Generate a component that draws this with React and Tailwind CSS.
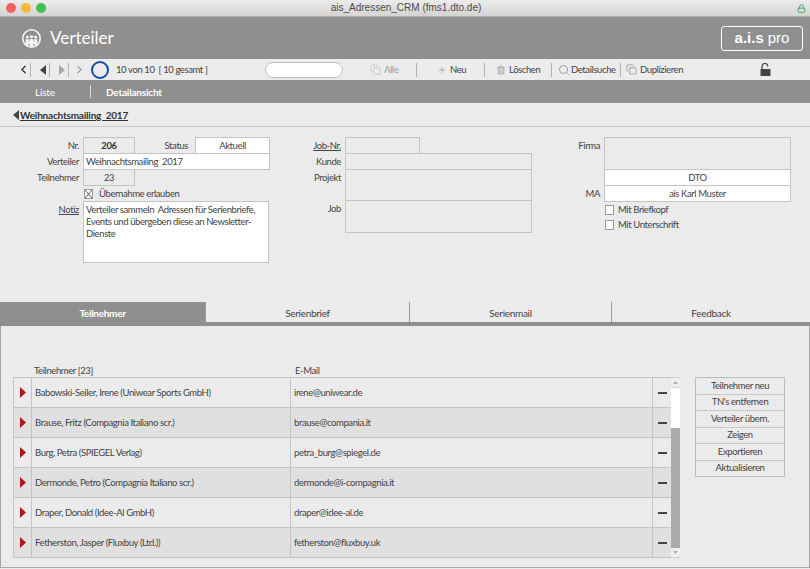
import { ChevronLeft, ChevronRight, Plus, Trash2, Search, Copy, Lock } from "lucide-react";

const rows = [
  { name: "Babowski-Seiler, Irene (Uniwear Sports GmbH)", mail: "irene@uniwear.de" },
  { name: "Brause, Fritz (Compagnia Italiano scr.)", mail: "brause@compania.it" },
  { name: "Burg, Petra (SPIEGEL Verlag)", mail: "petra_burg@spiegel.de" },
  { name: "Dermonde, Petro (Compagnia Italiano scr.)", mail: "dermonde@i-compagnia.it" },
  { name: "Draper, Donald (Idee-Al GmbH)", mail: "draper@idee-al.de" },
  { name: "Fetherston, Jasper (Fluxbuy (Ltd.))", mail: "fetherston@fluxbuy.uk" },
];

const actions = ["Teilnehmer neu", "TN's entfernen", "Verteiler übern.", "Zeigen", "Exportieren", "Aktualisieren"];
const tabs = ["Serienbrief", "Serienmail", "Feedback"];

function Sep({ className = "" }) {
  return <div className={`w-px h-3.5 bg-[#b4b4b4] ${className}`} />;
}

function Tri({ dir, color }) {
  return (
    <svg width="6" height="10" viewBox="0 0 6 10" className="shrink-0">
      <path d={dir === "left" ? "M6 0V10L0 5Z" : "M0 0V10L6 5Z"} fill={color} />
    </svg>
  );
}

function Label({ children, className = "" }) {
  return <div className={`text-right pr-1 pt-[3px] ${className}`}>{children}</div>;
}

function Field({ children, className = "" }) {
  return (
    <div className={`border border-[#c4c4c4] -mb-px flex items-center justify-center ${className}`}>
      {children}
    </div>
  );
}

function Row({ label, labelWidth, children, className = "" }) {
  return (
    <div className={`flex ${className}`}>
      <Label className={labelWidth}>{label}</Label>
      {children}
    </div>
  );
}

function CheckBox({ checked }) {
  return (
    <div className="w-[9px] h-[10px] border border-[#9a9a9a] bg-white flex items-center justify-center shrink-0">
      {checked && (
        <svg width="7" height="8" viewBox="0 0 7 8">
          <path d="M0 0L7 8M7 0L0 8" stroke="#444" strokeWidth="0.9" />
        </svg>
      )}
    </div>
  );
}

function GroupIcon() {
  return (
    <svg width="19" height="19" viewBox="0 0 19 19" className="shrink-0">
      <circle cx="9.5" cy="9.5" r="8.7" fill="#8f8f8f" stroke="#f6f6f6" strokeWidth="1.6" />
      <g fill="#f6f6f6">
        <circle cx="5.4" cy="8" r="1.5" />
        <circle cx="9.5" cy="7.6" r="1.7" />
        <circle cx="13.6" cy="8" r="1.5" />
        <path d="M3.6 10.2h3.5l.4 4.4-2 2-2-1.6zM7.7 10h3.6l.2 7.4h-4zM11.9 10.2h3.5l.1 4.8-2 1.6-2-2z" />
      </g>
    </svg>
  );
}

function OpenLock() {
  return (
    <svg width="11" height="13" viewBox="0 0 11 13" className="shrink-0">
      <path d="M2 6V3.4a2.9 2.9 0 0 1 5.8 0" fill="none" stroke="#444" strokeWidth="1.2" />
      <rect x="0.5" y="6" width="10" height="7" fill="#444" />
    </svg>
  );
}

export default function App() {
  return (
    <div className="w-[810px] h-[569px] overflow-hidden bg-[#ebebeb] text-[#444] text-[9.5px] leading-[12px] tracking-[-0.4px] font-['Lato',sans-serif]">
      {/* window title */}
      <div className="h-[17px] flex items-center pl-[6px] pr-[4px] tracking-normal bg-gradient-to-b from-[#ececec] to-[#d4d4d4] border-b border-[#b0b0b0]">
        <div className="flex gap-[5px] w-[100px]">
          <div className="w-[10px] h-[10px] rounded-full bg-[#f2625a]" />
          <div className="w-[10px] h-[10px] rounded-full bg-[#f5b83d]" />
          <div className="w-[10px] h-[10px] rounded-full bg-[#3fc04f]" />
        </div>
        <div className="flex-1 text-center text-[10px] text-[#4a4a4a] font-['Liberation_Sans',sans-serif] pr-[91px]">
          ais_Adressen_CRM (fms1.dto.de)
        </div>
        <Lock size={9} className="text-[#3fa35a]" strokeWidth={2.5} />
      </div>

      {/* module header */}
      <div className="h-[42px] bg-[#8f8f8f] flex items-center pl-[22px] pr-[7px] tracking-normal">
        <GroupIcon />
        <div className="ml-[9px] text-[17px] leading-[20px] text-white">Verteiler</div>
        <div className="ml-auto w-[82px] h-[25px] border border-white rounded-[3px] flex items-center justify-center gap-1 text-[15px] text-white font-['Liberation_Sans',sans-serif]">
          <span className="font-bold">a.i.s</span>
          <span>pro</span>
        </div>
      </div>

      {/* toolbar */}
      <div className="h-[21px] flex items-center bg-[#ececec] pl-[17px]">
        <ChevronLeft size={13} strokeWidth={2.4} className="text-[#333] shrink-0" />
        <Sep className="mr-[9px]" />
        <Tri dir="left" color="#444" />
        <Sep className="ml-[3px] mr-[9px]" />
        <Tri dir="right" color="#a8a8a8" />
        <Sep className="ml-[3px] mr-[4px]" />
        <ChevronRight size={13} strokeWidth={2} className="text-[#a0a0a0] shrink-0" />
        <div className="ml-[5px] w-[18px] h-[18px] rounded-full border-[2.5px] border-[#0d4ea6] shrink-0" />
        <div className="ml-[7px] w-[149px] shrink-0">10 von 10&nbsp; [ 10 gesamt ]</div>
        <div className="w-[78px] h-[16px] rounded-full bg-white border border-[#bdbdbd] shrink-0" />
        <Copy size={11} strokeWidth={1} className="ml-[27px] text-[#aaa] shrink-0" />
        <div className="ml-[3px] w-[32px] text-[#9a9a9a] shrink-0">Alle</div>
        <Sep />
        <Plus size={10} strokeWidth={1} className="ml-[20px] text-[#666] shrink-0" />
        <div className="ml-[3px] w-[34px] shrink-0">Neu</div>
        <Sep />
        <Trash2 size={10} strokeWidth={1} className="ml-[11px] text-[#888] fill-[#ccc] shrink-0" />
        <div className="ml-[3px] w-[42px] shrink-0">Löschen</div>
        <Sep />
        <Search size={12} strokeWidth={1} className="ml-[6px] text-[#555] shrink-0" />
        <div className="ml-px w-[49px] shrink-0">Detailsuche</div>
        <Sep />
        <Copy size={11} strokeWidth={1} className="ml-[5px] text-[#555] shrink-0" />
        <div className="ml-[3px] w-[120px] shrink-0">Duplizieren</div>
        <OpenLock />
      </div>

      {/* list / detail nav */}
      <div className="h-[23px] bg-[#8f8f8f] flex items-center text-white text-[10px] tracking-[-0.2px]">
        <div className="w-[90px] pl-[35px]">Liste</div>
        <div className="w-px h-[13px] bg-[#ddd]" />
        <div className="pl-[15px] font-bold">Detailansicht</div>
      </div>

      {/* breadcrumb */}
      <div className="h-[24px] flex items-center pl-[13px] gap-px border-b border-[#c8c8c8] text-[10px] tracking-[-0.2px]">
        <Tri dir="left" color="#444" />
        <span className="font-bold underline text-[#333]">Weihnachtsmailing&nbsp; 2017</span>
      </div>

      {/* detail form */}
      <div className="h-[175px] flex pt-[10px]">
        <div className="w-[270px] shrink-0">
          <Row label="Nr." labelWidth="w-[83px]">
            <Field className="w-[52px] h-[17px] font-bold text-[#333]">206</Field>
            <div className="w-[60px] text-right pr-[7px] pt-[3px]">Status</div>
            <Field className="flex-1 h-[17px] bg-white">Aktuell</Field>
          </Row>
          <Row label="Verteiler" labelWidth="w-[83px]">
            <Field className="flex-1 h-[17px] bg-white justify-start! pl-0.5">Weihnachtsmailing&nbsp; 2017</Field>
          </Row>
          <Row label="Teilnehmer" labelWidth="w-[83px]">
            <Field className="w-[52px] h-[17px]">23</Field>
          </Row>
          <div className="flex items-center pl-[84px] h-[15px] mt-px gap-[6px]">
            <CheckBox checked />
            <span>Übernahme erlauben</span>
          </div>
          <Row label={<span className="underline">Notiz</span>} labelWidth="w-[83px]">
            <div className="flex-1 h-[62px] mr-px bg-white border border-[#c4c4c4] px-0.5 pt-[2px]">
              Verteiler sammeln&nbsp; Adressen für Serienbriefe, Events und übergeben diese an Newsletter-Dienste
            </div>
          </Row>
        </div>

        <div className="w-[262px] shrink-0">
          <Row label={<span className="underline">Job-Nr.</span>} labelWidth="w-[75px]">
            <Field className="w-[75px] h-[17px]" />
          </Row>
          <Row label="Kunde" labelWidth="w-[75px]">
            <Field className="flex-1 h-[17px]" />
          </Row>
          <Row label="Projekt" labelWidth="w-[75px]">
            <Field className="flex-1 h-[32px]" />
          </Row>
          <Row label="Job" labelWidth="w-[75px]">
            <Field className="flex-1 h-[33px]" />
          </Row>
        </div>

        <div className="w-[259px] shrink-0">
          <Row label="Firma" labelWidth="w-[72px]">
            <Field className="flex-1 h-[33px]" />
          </Row>
          <Row label="" labelWidth="w-[72px]">
            <Field className="flex-1 h-[17px] bg-white">DTO</Field>
          </Row>
          <Row label="MA" labelWidth="w-[72px]">
            <Field className="flex-1 h-[17px] bg-white">ais Karl Muster</Field>
          </Row>
          <div className="flex items-center pl-[73px] h-[15px] mt-px gap-[4px]">
            <CheckBox />
            <span>Mit Briefkopf</span>
          </div>
          <div className="flex items-center pl-[73px] h-[15px] gap-[4px]">
            <CheckBox />
            <span>Mit Unterschrift</span>
          </div>
        </div>
      </div>

      {/* tabs */}
      <div className="h-[24px] flex bg-[#8f8f8f] pb-[4px] text-[10px] tracking-[-0.3px]">
        <div className="w-[205px] flex items-center justify-center font-bold text-white pt-px">Teilnehmer</div>
        {tabs.map((tab, i) => (
          <div
            key={tab}
            className={`flex items-center justify-center pt-px bg-[#ececec] border-l border-[#9c9c9c] ${
              i === 0 ? "w-[204px]" : i === 1 ? "w-[202px]" : "flex-1"
            }`}
          >
            {tab}
          </div>
        ))}
      </div>

      {/* tab panel */}
      <div className="h-[242px] border-x border-b border-[#a8a8a8] pl-[12px] pt-[38px]">
        <div className="flex h-[13px] items-center">
          <div className="w-[282px] pl-[21px]">Teilnehmer [23]</div>
          <div>E-Mail</div>
        </div>
        <div className="flex">
          <div className="w-[658px] shrink-0 border border-[#c4c4c4] border-b-0 border-r-0">
            {rows.map((row, i) => (
              <div
                key={row.mail}
                className={`h-[30px] flex items-center border-b border-[#c4c4c4] ${i % 2 ? "bg-[#e0e0e0]" : "bg-[#ebebeb]"}`}
              >
                <div className="w-[18px] h-full flex items-center justify-center border-r border-[#c4c4c4]">
                  <svg width="6" height="11" viewBox="0 0 6 11">
                    <path d="M0 0V11L6 5.5Z" fill="#b01818" />
                  </svg>
                </div>
                <div className="w-[259px] pl-[3px] h-full flex items-center border-r border-[#c4c4c4]">{row.name}</div>
                <div className="w-[362px] pl-[3px] h-full flex items-center border-r border-[#c4c4c4]">{row.mail}</div>
                <div className="flex-1 flex justify-center">
                  <div className="w-[9px] h-[2px] bg-[#444]" />
                </div>
              </div>
            ))}
          </div>
          <div className="w-[9px] h-[181px] flex flex-col bg-white border-y border-[#d0d0d0] shrink-0">
            <div className="h-[10px] flex items-center justify-center bg-[#f0f0f0] border-b border-[#d8d8d8]">
              <svg width="5" height="3" viewBox="0 0 5 3">
                <path d="M2.5 0L5 3H0Z" fill="#b0b0b0" />
              </svg>
            </div>
            <div className="h-[40px]" />
            <div className="flex-1 bg-[#ababab]" />
            <div className="h-[9px] flex items-center justify-center bg-[#f0f0f0]">
              <svg width="5" height="3" viewBox="0 0 5 3">
                <path d="M2.5 3L5 0H0Z" fill="#b0b0b0" />
              </svg>
            </div>
          </div>
          <div className="ml-[15px] w-[90px] h-[100px] border border-[#bcbcbc] shrink-0 flex flex-col divide-y divide-[#c8c8c8]">
            {actions.map((action) => (
              <div key={action} className="flex-1 flex items-center justify-center">
                {action}
              </div>
            ))}
          </div>
        </div>
      </div>
    </div>
  );
}
